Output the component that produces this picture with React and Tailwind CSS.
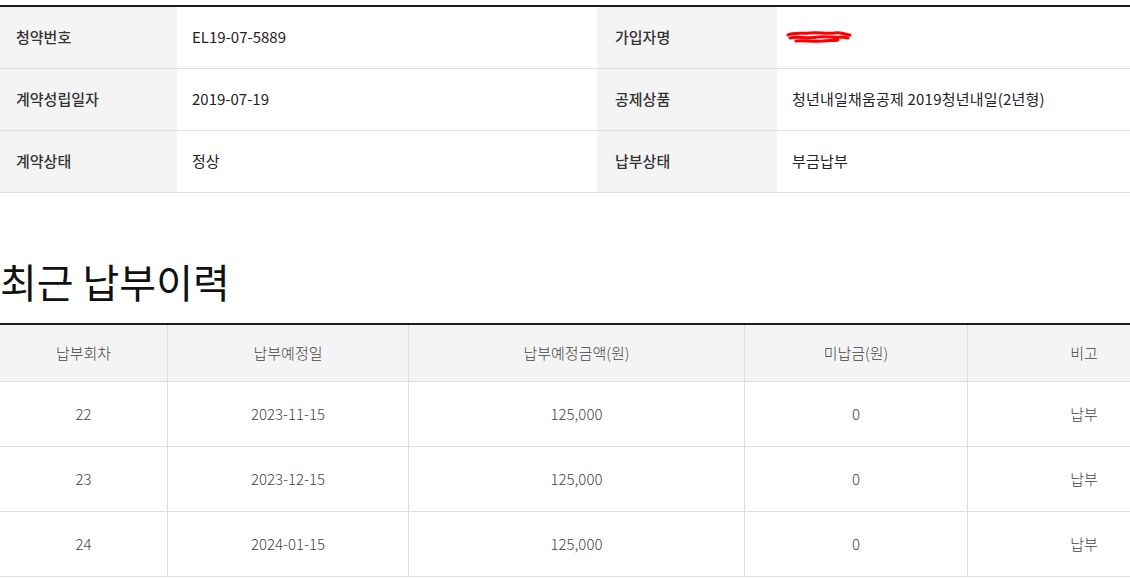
import React from "react";

const font = { fontFamily: '"Noto Sans CJK KR", "Noto Sans", sans-serif' };

const info = [
  ["청약번호", "EL19-07-5889", "가입자명", null],
  ["계약성립일자", "2019-07-19", "공제상품", "청년내일채움공제 2019청년내일(2년형)"],
  ["계약상태", "정상", "납부상태", "부금납부"],
];

const history = [
  { round: "22", date: "2023-11-15", amount: "125,000", unpaid: "0", note: "납부" },
  { round: "23", date: "2023-12-15", amount: "125,000", unpaid: "0", note: "납부" },
  { round: "24", date: "2024-01-15", amount: "125,000", unpaid: "0", note: "납부" },
];

// 가입자명 가림 처리 (빨간 낙서)
const Scribble = () => (
  <svg width="68" height="18" viewBox="0 0 68 18" className="block ml-[-6px]">
    <path
      d="M2 6 C8 3 16 5 24 4 C32 3 40 5 48 4 C54 3 58 5 64 6 M4 9 C12 7 22 10 32 8 C40 7 48 9 56 8 L62 9 M10 12 C18 11 26 13 36 12 C42 11 48 12 52 11"
      stroke="#ff0000"
      strokeWidth="3"
      fill="none"
      strokeLinecap="round"
    />
  </svg>
);

export default function App() {
  return (
    <div className="w-[1130px] h-[579px] overflow-hidden bg-white pt-[5px]" style={font}>
      {/* 계약 정보 */}
      <div className="w-[1200px] border-t-2 border-[#1a1a1a]">
        {info.map(([l1, v1, l2, v2], i) => (
          <div key={i} className="flex h-[62px] border-b border-[#dedede] text-[15px]">
            <div className="w-[177px] bg-[#f4f4f4] pl-4 flex items-center font-medium text-[#333]">{l1}</div>
            <div className="w-[420px] pl-[15px] flex items-center text-[#222]">{v1}</div>
            <div className="w-[180px] bg-[#f4f4f4] pl-[18px] flex items-center font-medium text-[#333]">{l2}</div>
            <div className="flex-1 pl-[15px] flex items-center text-[#222] tracking-[0.2px]">
              {v2 === null ? <Scribble /> : v2}
            </div>
          </div>
        ))}
      </div>

      {/* 최근 납부이력 */}
      <h2 className="mt-[58px] text-[40px] leading-[60px] text-[#111] font-normal">
        최근 납부이력
      </h2>

      <div className="mt-[12px] w-[1200px] border-t-2 border-[#1a1a1a]">
        <div className="flex h-[57px] bg-[#f4f4f4] border-b border-[#dedede] text-[15px] font-light text-[#444]">
          <div className="w-[168px] border-r border-[#dedede] flex items-center justify-center">납부회차</div>
          <div className="w-[241px] border-r border-[#dedede] flex items-center justify-center">납부예정일</div>
          <div className="w-[336px] border-r border-[#dedede] flex items-center justify-center">납부예정금액(원)</div>
          <div className="w-[223px] border-r border-[#dedede] flex items-center justify-center">미납금(원)</div>
          <div className="flex-1 flex items-center justify-center">비고</div>
        </div>
        {history.map((r) => (
          <div key={r.round} className="flex h-[65px] border-b border-[#dedede] text-[15px] font-light text-[#444]">
            <div className="w-[168px] border-r border-[#dedede] flex items-center justify-center">{r.round}</div>
            <div className="w-[241px] border-r border-[#dedede] flex items-center justify-center">{r.date}</div>
            <div className="w-[336px] border-r border-[#dedede] flex items-center justify-center">{r.amount}</div>
            <div className="w-[223px] border-r border-[#dedede] flex items-center justify-center">{r.unpaid}</div>
            <div className="flex-1 flex items-center justify-center">{r.note}</div>
          </div>
        ))}
      </div>
    </div>
  );
}
